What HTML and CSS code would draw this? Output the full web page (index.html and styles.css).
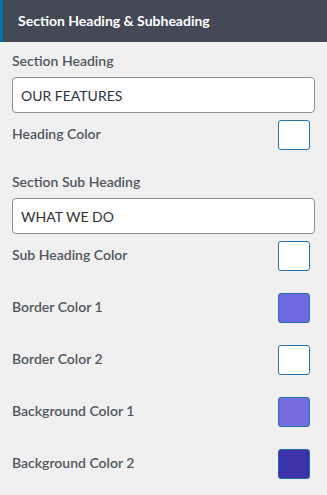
FILE: index.html
```html
<!DOCTYPE html>
<html lang="en">
<head>
  <meta charset="UTF-8" />
  <meta name="viewport" content="width=device-width, initial-scale=1.0"/>
  <title>Section Heading &amp; Subheading</title>
  <link rel="stylesheet" href="styles.css">
</head>
<body>
  <div class="panel-title">Section Heading &amp; Subheading</div>

  <div class="controls">
    <div class="field">
      <label for="heading">Section Heading</label>
      <input type="text" id="heading" value="OUR FEATURES" />
    </div>
    <div class="color-row">
      <span>Heading Color</span>
      <button class="swatch" style="background:#ffffff"></button>
    </div>

    <div class="field sub">
      <label for="subheading">Section Sub Heading</label>
      <input type="text" id="subheading" value="WHAT WE DO" />
    </div>
    <div class="color-row">
      <span>Sub Heading Color</span>
      <button class="swatch" style="background:#ffffff"></button>
    </div>
    <div class="color-row">
      <span>Border Color 1</span>
      <button class="swatch" style="background:#6e69e0"></button>
    </div>
    <div class="color-row">
      <span>Border Color 2</span>
      <button class="swatch" style="background:#ffffff"></button>
    </div>
    <div class="color-row">
      <span>Background Color 1</span>
      <button class="swatch" style="background:#786de0"></button>
    </div>
    <div class="color-row">
      <span>Background Color 2</span>
      <button class="swatch" style="background:#3b31a9"></button>
    </div>
  </div>
</body>
</html>
```

FILE: styles.css
```css
body {
  margin: 0;
  font-family: Lato, 'Liberation Sans', sans-serif;
  font-size: 14px;
  background-color: #f0f0f0;
  color: #50575e;
}
.panel-title {
  height: 42px;
  line-height: 42px;
  background-color: #434a55;
  border-left: 3px solid #0073aa;
  padding-left: 15px;
  color: #fff;
  font-weight: 700;
  font-size: 14px;
}
.controls {
  padding: 9px 12px 0;
}
.field.sub {
  margin-top: 3px;
}
.field label {
  display: block;
  line-height: 20px;
  font-weight: 600;
  margin-bottom: 6px;
}
.field input {
  box-sizing: border-box;
  width: 100%;
  height: 36px;
  padding: 0 8px;
  border: 1px solid #8c8f94;
  border-radius: 4px;
  background: #fff;
  font-family: inherit;
  font-size: 14px;
  color: #2c3338;
  margin: 0 0 7px;
}
.color-row {
  display: flex;
  align-items: center;
  justify-content: space-between;
  height: 30px;
  padding-right: 5px;
  margin-bottom: 22px;
  font-weight: 600;
}
.color-row span {
  margin-top: -4px;
}
.swatch {
  width: 32px;
  height: 30px;
  padding: 0;
  border: 1px solid #2271b1;
  border-radius: 3px;
}
```
